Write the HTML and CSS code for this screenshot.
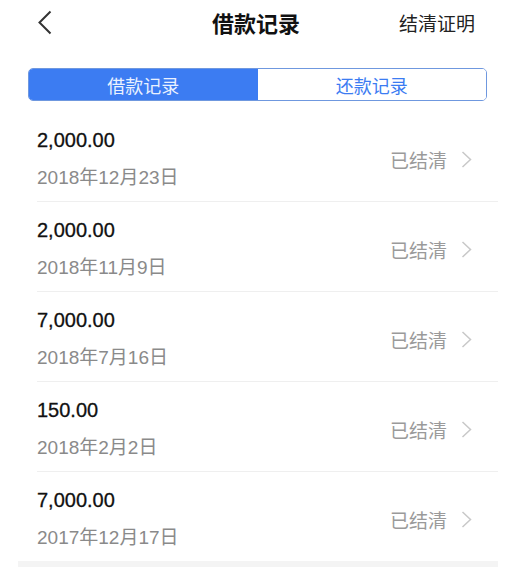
FILE: index.html
```html
<!DOCTYPE html>
<html lang="zh">
<head>
<meta charset="utf-8">
<title>借款记录</title>
<link rel="stylesheet" href="styles.css">
</head>
<body>
<div class="page">
  <header class="topbar">
    <span class="back">
      <svg width="16" height="25" viewBox="0 0 16 25"><polyline points="13.5,1.5 2.5,12.5 13.5,23.5" fill="none" stroke="#333" stroke-width="2"/></svg>
    </span>
    <h1 class="title">借款记录</h1>
    <span class="action">结清证明</span>
  </header>

  <div class="tabs">
    <div class="tab active">借款记录</div>
    <div class="tab">还款记录</div>
  </div>

  <ul class="list">
    <li class="row">
      <div class="info"><div class="amount">2,000.00</div><div class="date">2018年12月23日</div></div>
      <div class="status">已结清<svg class="arrow" width="11" height="17" viewBox="0 0 11 17"><polyline points="1.5,1 9.5,8.5 1.5,16" fill="none" stroke="#c8c8c8" stroke-width="1.5"/></svg></div>
    </li>
    <li class="row">
      <div class="info"><div class="amount">2,000.00</div><div class="date">2018年11月9日</div></div>
      <div class="status">已结清<svg class="arrow" width="11" height="17" viewBox="0 0 11 17"><polyline points="1.5,1 9.5,8.5 1.5,16" fill="none" stroke="#c8c8c8" stroke-width="1.5"/></svg></div>
    </li>
    <li class="row">
      <div class="info"><div class="amount">7,000.00</div><div class="date">2018年7月16日</div></div>
      <div class="status">已结清<svg class="arrow" width="11" height="17" viewBox="0 0 11 17"><polyline points="1.5,1 9.5,8.5 1.5,16" fill="none" stroke="#c8c8c8" stroke-width="1.5"/></svg></div>
    </li>
    <li class="row">
      <div class="info"><div class="amount">150.00</div><div class="date">2018年2月2日</div></div>
      <div class="status">已结清<svg class="arrow" width="11" height="17" viewBox="0 0 11 17"><polyline points="1.5,1 9.5,8.5 1.5,16" fill="none" stroke="#c8c8c8" stroke-width="1.5"/></svg></div>
    </li>
    <li class="row last">
      <div class="info"><div class="amount">7,000.00</div><div class="date">2017年12月17日</div></div>
      <div class="status">已结清<svg class="arrow" width="11" height="17" viewBox="0 0 11 17"><polyline points="1.5,1 9.5,8.5 1.5,16" fill="none" stroke="#c8c8c8" stroke-width="1.5"/></svg></div>
    </li>
  </ul>
  <div class="footer-band"></div>
</div>
</body>
</html>
```

FILE: styles.css
```css
html, body {
  margin: 0;
  padding: 0;
  background: #ffffff;
}
body {
  font-family: "Liberation Sans", "Noto Sans CJK SC", sans-serif;
  color: #111;
}
.page {
  width: 507px;
  height: 567px;
  overflow: hidden;
}
.topbar {
  height: 44px;
  display: grid;
  grid-template-columns: 1fr auto 1fr;
  align-items: center;
  padding: 0 32px 0 37px;
}
.back {
  display: flex;
  justify-self: start;
}
.title {
  margin: 0;
  font-size: 22px;
  font-weight: bold;
  color: #111;
  font-family: "Noto Sans CJK SC", sans-serif;
}
.action {
  justify-self: end;
  font-size: 19px;
  color: #222;
  font-family: "Noto Sans CJK SC", sans-serif;
}
.tabs {
  margin: 24px 20px 0 28px;
  height: 33px;
  display: flex;
  border: 1px solid #6f98df;
  border-radius: 5px;
  overflow: hidden;
  box-sizing: border-box;
}
.tab {
  flex: 1;
  display: flex;
  align-items: center;
  justify-content: center;
  font-size: 18px;
  color: #3c7cf2;
  font-family: "Noto Sans CJK SC", sans-serif;
  background: #fff;
}
.tab.active {
  background: #3c7cf2;
  color: #eaf1ff;
}
.list {
  list-style: none;
  margin: 11px 9px 0 37px;
  padding: 0;
}
.row {
  display: flex;
  justify-content: space-between;
  align-items: center;
  padding: 16px 26px 11px 0;
  border-bottom: 1px solid #efefef;
}
.row.last {
  border-bottom: none;
}
.info {
  display: flex;
  flex-direction: column;
  gap: 14px;
}
.amount {
  font-size: 20px;
  line-height: 24px;
  height: 24px;
  color: #111;
  -webkit-text-stroke: 0.3px #111;
}
.date {
  font-size: 19px;
  line-height: 24px;
  height: 24px;
  color: #8a8a8a;
}
.status {
  display: flex;
  align-items: center;
  gap: 14px;
  font-size: 19px;
  color: #9a9a9a;
  font-family: "Noto Sans CJK SC", sans-serif;
}
.arrow {
  display: block;
}
.footer-band {
  margin: 0 9px 0 18px;
  height: 8px;
  background: #f4f4f4;
}
```
